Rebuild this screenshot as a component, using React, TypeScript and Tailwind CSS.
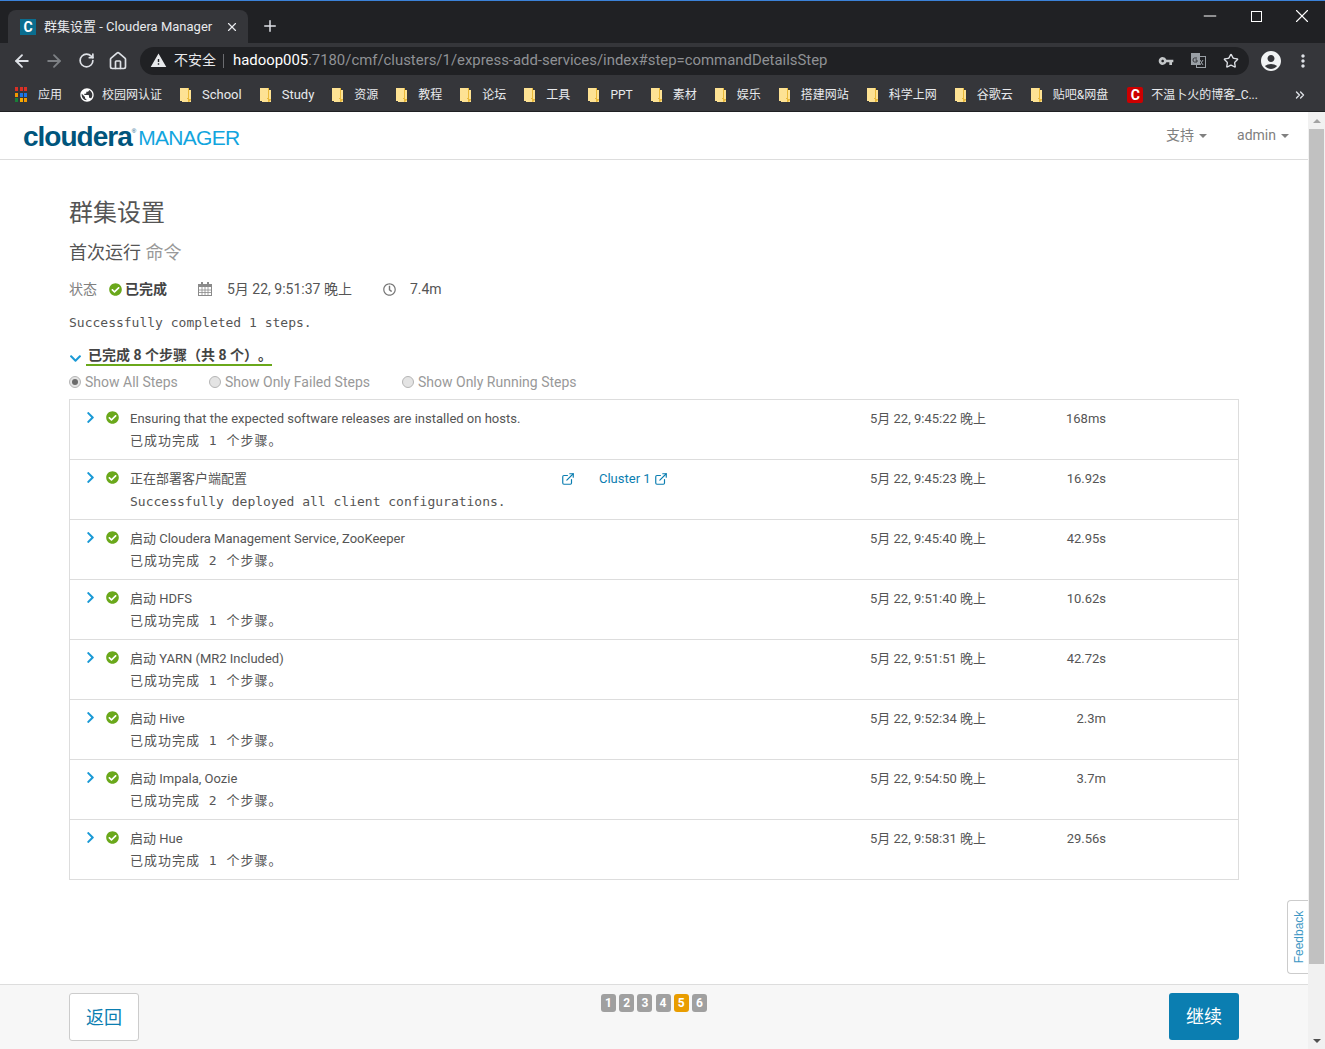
import { ArrowLeft, ArrowRight, RotateCw, Home, Plus, X, Minus, Star, ChevronsRight, ExternalLink } from 'lucide-react'
import { MdWarning, MdVpnKey, MdAccountCircle, MdMoreVert, MdPublic } from 'react-icons/md'
import { FaCheckCircle, FaChevronRight, FaChevronDown, FaRegClock } from 'react-icons/fa'

const cjk = "font-['Roboto','Noto_Sans_CJK_SC',sans-serif]"
const mono = "font-['DejaVu_Sans_Mono','Noto_Sans_CJK_SC',monospace]"

const bookmarks = [
  { label: 'School', latin: true },
  { label: 'Study', latin: true },
  { label: '资源' },
  { label: '教程' },
  { label: '论坛' },
  { label: '工具' },
  { label: 'PPT' },
  { label: '素材' },
  { label: '娱乐' },
  { label: '搭建网站' },
  { label: '科学上网' },
  { label: '谷歌云' },
  { label: '贴吧&网盘' },
]

const steps = [
  { title: 'Ensuring that the expected software releases are installed on hosts.', detail: '1', time: '5月 22, 9:45:22 晚上', dur: '168ms' },
  { title: '正在部署客户端配置', mono: 'Successfully deployed all client configurations.', link: true, time: '5月 22, 9:45:23 晚上', dur: '16.92s' },
  { title: '启动 Cloudera Management Service, ZooKeeper', detail: '2', time: '5月 22, 9:45:40 晚上', dur: '42.95s' },
  { title: '启动 HDFS', detail: '1', time: '5月 22, 9:51:40 晚上', dur: '10.62s' },
  { title: '启动 YARN (MR2 Included)', detail: '1', time: '5月 22, 9:51:51 晚上', dur: '42.72s' },
  { title: '启动 Hive', detail: '1', time: '5月 22, 9:52:34 晚上', dur: '2.3m' },
  { title: '启动 Impala, Oozie', detail: '2', time: '5月 22, 9:54:50 晚上', dur: '3.7m' },
  { title: '启动 Hue', detail: '1', time: '5月 22, 9:58:31 晚上', dur: '29.56s' },
]

function Folder() {
  return (
    <svg width="11" height="14" viewBox="0 0 11 14" className="shrink-0">
      <path d="M0 0h9v2h2v12H2v-1H0z" fill="#fde293" />
      <path d="M8 0h1v11h2v1l-2 2H8v-3H7v-1h1z" fill="#e9b93a" />
    </svg>
  )
}

function AppsGrid() {
  const colors = ['#d93025', '#d93025', '#d93025', '#f29900', '#1a73e8', '#1a73e8', '#188038', '#f9ab00', '#f29900']
  return (
    <div className="grid grid-cols-3 gap-[1.5px] w-[12px] shrink-0">
      {colors.map((c, i) => (
        <span key={i} className="w-[3px] h-[4px]" style={{ background: c }} />
      ))}
    </div>
  )
}

function TranslateIcon() {
  return (
    <svg width="15" height="15" viewBox="0 0 15 15">
      <rect x="5.5" y="3.5" width="9" height="11" fill="none" stroke="#9aa0a6" />
      <path d="M0 0h9v12H0z" fill="#9aa0a6" />
      <path d="M6 5H3.5a1.5 2 0 1 0 0 4H6V7H4.5" fill="none" stroke="#35363a" />
      <path d="M9 7l3 5M12 7l-3 5" stroke="#9aa0a6" />
    </svg>
  )
}

function CalendarIcon() {
  return (
    <svg width="14" height="14" viewBox="0 0 14 14" className="text-[#8a8a8a]">
      <rect x="0.5" y="2.5" width="13" height="11" fill="none" stroke="currentColor" />
      <path d="M0 2h14v3H0z" fill="currentColor" />
      <path d="M3 0h2v3H3zM9 0h2v3H9z" fill="currentColor" />
      <path d="M0.5 8h13M0.5 10.5h13M4 5v8M7 5v8M10 5v8" stroke="currentColor" strokeWidth="0.8" fill="none" />
    </svg>
  )
}

function Radio({ on, label, className }: { on?: boolean; label: string; className: string }) {
  return (
    <div className={`flex items-center gap-[4px] ${className}`}>
      <span className="w-3 h-3 rounded-full border border-[#b5b5b5] bg-[#e4e4e4] flex items-center justify-center">
        {on && <span className="w-[6px] h-[6px] rounded-full bg-[#6b6b6b]" />}
      </span>
      <span>{label}</span>
    </div>
  )
}

function BrowserChrome() {
  return (
    <div className={`bg-[#202124] text-white border-t border-t-[#3b82d9] ${cjk}`}>
      {/* tabs */}
      <div className="h-[42px] flex items-end pl-[8px] relative">
        <div className="w-[240px] h-[33px] bg-[#35363a] rounded-t-lg flex items-center pl-[12px] pr-[9px]">
          <span className="w-[16px] h-[16px] bg-[#0a6d8f] flex items-center justify-center text-[14px] font-bold leading-none">C</span>
          <span className="ml-[8px] text-[13px] text-[#e8eaed] flex-1 whitespace-nowrap">群集设置 - Cloudera Manager</span>
          <X size={14} strokeWidth={2} className="text-[#e8eaed]" />
        </div>
        <Plus size={18} strokeWidth={2} className="ml-[13px] mb-[8px] text-[#dee1e6]" />
        <div className="absolute right-0 top-0 h-[30px] flex items-center text-white">
          <div className="w-[46px] flex justify-center"><Minus size={20} strokeWidth={1.2} /></div>
          <div className="w-[46px] flex justify-center"><span className="w-[11px] h-[11px] border border-white" /></div>
          <div className="w-[46px] flex justify-center"><X size={22} strokeWidth={1.2} /></div>
        </div>
      </div>
      {/* address bar */}
      <div className="h-[35px] bg-[#35363a] flex items-center pl-[12px] pr-[10px]">
        <ArrowLeft size={20} strokeWidth={2.2} className="text-[#dee1e6]" />
        <ArrowRight size={20} strokeWidth={2.2} className="ml-[12px] text-[#7d8084]" />
        <RotateCw size={17} strokeWidth={2.4} className="ml-[14px] text-[#dee1e6]" />
        <Home size={20} strokeWidth={2} className="ml-[13px] text-[#dee1e6]" />
        <div className="ml-[12px] w-[1109px] h-[28px] rounded-full bg-[#202124] flex items-center pl-[10px] pr-[10px]">
          <MdWarning size={17} className="text-[#e8eaed]" />
          <span className="ml-[7px] text-[14px] text-[#e8eaed]">不安全</span>
          <span className="ml-[7px] w-px h-[14px] bg-[#6b6c70]" />
          <span className="ml-[9px] text-[14.9px] text-white whitespace-nowrap">hadoop005<span className="text-[#8f9195]">:7180/cmf/clusters/1/express-add-services/index#step=commandDetailsStep</span></span>
          <div className="ml-auto flex items-center gap-[17px] text-[#c4c7c9]">
            <MdVpnKey size={16} />
            <TranslateIcon />
            <Star size={16} strokeWidth={2} className="text-[#dee1e6]" />
          </div>
        </div>
        <MdAccountCircle size={24} className="ml-[10px] text-[#f1f3f4]" />
        <MdMoreVert size={20} className="ml-[10px] text-[#dee1e6]" />
      </div>
      {/* bookmarks */}
      <div className="h-[34px] bg-[#35363a] border-b border-b-[#1f2023] flex items-center pl-[15px] text-[12px] text-[#e8eaed] whitespace-nowrap">
        <div className="w-[64px] flex items-center gap-[11px] shrink-0"><AppsGrid /><span>应用</span></div>
        <div className="w-[101px] flex items-center gap-[7px] shrink-0"><MdPublic size={16} className="text-white" /><span>校园网认证</span></div>
        <div className="flex items-center gap-[18px]">
          {bookmarks.map((b) => (
            <div key={b.label} className={`flex items-center gap-[11px] shrink-0 ${b.latin ? 'text-[13px]' : ''}`}>
              <Folder />
              <span>{b.label}</span>
            </div>
          ))}
          <div className="ml-[1px] flex items-center gap-[8px]">
            <span className="w-[16px] h-[16px] bg-[#c00] rounded-[2px] flex items-center justify-center text-white text-[14px] font-bold leading-none">C</span>
            <span>不温卜火的博客_C...</span>
          </div>
        </div>
        <ChevronsRight size={14} strokeWidth={2.4} className="ml-auto mr-[18px] text-[#dee1e6]" />
      </div>
    </div>
  )
}

function StepRow({ s }: { s: (typeof steps)[number] }) {
  return (
    <div className="h-[60px] last:h-[59px] border-b border-[#dddddd] last:border-b-0 flex items-start">
      <FaChevronRight size={13} className="ml-[14px] mt-[11px] text-[#1b9ad6]" />
      <FaCheckCircle size={13} className="ml-[9px] mt-[11px] text-[#6aa81b]" />
      <div className="ml-[11px] w-[430px] pt-[10px]">
        <div className="text-[13px] leading-[18px] text-[#555] whitespace-nowrap">{s.title}</div>
        {s.mono ? (
          <div className={`${mono} text-[13px] leading-[18px] mt-[5px] text-[#555] whitespace-nowrap`}>{s.mono}</div>
        ) : (
          <div className={`${mono} text-[13px] tracking-[1px] leading-[18px] mt-[4px] text-[#555] whitespace-pre`}>已成功完成 {s.detail} 个步骤。</div>
        )}
      </div>
      <div className="w-[110px] pt-[10px] h-[28px] flex items-center text-[#0b7eb1] text-[13px] whitespace-nowrap">
        {s.link && (
          <>
            <ExternalLink size={14} strokeWidth={2} className="ml-[1px]" />
            <span className="ml-[24px]">Cluster 1</span>
            <ExternalLink size={14} strokeWidth={2} className="ml-[3px]" />
          </>
        )}
      </div>
      <div className="ml-[200px] w-[130px] pt-[10px] text-[13px] leading-[18px] text-[#555] whitespace-nowrap">{s.time}</div>
      <div className="w-[106px] pt-[10px] text-[13px] leading-[18px] text-[#555] text-right">{s.dur}</div>
    </div>
  )
}

export default function App() {
  return (
    <div className={`w-[1325px] h-[1049px] flex flex-col overflow-hidden bg-white ${cjk}`}>
      <BrowserChrome />
      <div className="flex-1 flex min-h-0">
        <div className="flex-1 flex flex-col relative min-w-0">
          {/* nav */}
          <div className="h-[48px] shrink-0 border-b border-[#dddddd] flex items-center pl-[23px] pr-[19px]">
            <div className="flex items-baseline mt-[3px] font-['Liberation_Sans',sans-serif]">
              <span className="text-[28px] leading-none font-bold tracking-[-1px] text-[#00557c]">cloudera</span>
              <span className="text-[6px] leading-none text-[#00557c] -translate-y-[13px]">®</span>
              <span className="ml-[2px] text-[21px] leading-none tracking-[-0.7px] text-[#12a5de] -translate-y-px">MANAGER</span>
            </div>
            <div className="ml-auto flex items-center text-[#808080]">
              <span className="text-[14px]">支持</span>
              <span className="ml-[5px] border-x-4 border-x-transparent border-t-4 border-t-[#808080]" />
              <span className="ml-[30px] text-[14px]">admin</span>
              <span className="ml-[5px] border-x-4 border-x-transparent border-t-4 border-t-[#808080]" />
            </div>
          </div>

          {/* content */}
          <div className="flex-1 min-h-0 px-[69px] pt-[36px]">
            <h1 className="text-[24px] leading-[34px] text-[#555]">群集设置</h1>
            <h2 className="mt-[10px] text-[18px] leading-[26px] text-[#555]">首次运行 <span className="text-[#999]">命令</span></h2>
            <div className="mt-[13px] h-[20px] flex items-center text-[14px] text-[#555] whitespace-nowrap">
              <span className="text-[#808080]">状态</span>
              <FaCheckCircle size={13} className="ml-[12px] text-[#6aa81b]" />
              <span className="ml-[3px] font-bold text-[#444]">已完成</span>
              <span className="ml-[31px]"><CalendarIcon /></span>
              <span className="ml-[15px]">5月 22, 9:51:37 晚上</span>
              <FaRegClock size={13} className="ml-[31px] text-[#777]" />
              <span className="ml-[14px]">7.4m</span>
            </div>
            <div className={`${mono} mt-[15px] text-[13px] leading-[18px] text-[#555] whitespace-nowrap`}>Successfully completed 1 steps.</div>
            <div className="mt-[14px] flex items-start">
              <FaChevronDown size={13} className="mt-[6px] text-[#1b9ad6]" />
              <div className="ml-[4px] w-[186px] border-b-2 border-[#6aa81b] text-[14px] leading-[19px] pl-[2px] h-[20px] font-bold text-[#444] whitespace-nowrap">已完成 8 个步骤（共 8 个）<span className="ml-[7px]">。</span></div>
            </div>
            <div className="mt-[6px] h-[20px] flex items-center text-[14px] text-[#999] whitespace-nowrap">
              <Radio on label="Show All Steps" className="w-[140px]" />
              <Radio label="Show Only Failed Steps" className="w-[193px]" />
              <Radio label="Show Only Running Steps" className="" />
            </div>
            <div className="mt-[7px] w-[1170px] border border-[#dddddd]">
              {steps.map((s) => (
                <StepRow key={s.time} s={s} />
              ))}
            </div>
          </div>

          {/* footer */}
          <div className="h-[65px] shrink-0 border-t border-[#dddddd] bg-[#f7f7f7] flex items-start justify-between px-[69px] pt-[8px] relative">
            <button className="w-[70px] h-[48px] bg-white border border-[#cccccc] rounded-[3px] text-[18px] text-[#0b7eb1]">返回</button>
            <div className="absolute left-[601px] top-[9px] flex gap-[3.2px]">
              {['1', '2', '3', '4', '5', '6'].map((n) => (
                <span key={n} className={`w-[15px] h-[18px] rounded-[3px] text-white text-[12px] font-bold flex items-center justify-center ${n === '5' ? 'bg-[#e99d00]' : 'bg-[#a0a0a0]'}`}>{n}</span>
              ))}
            </div>
            <button className="w-[70px] h-[47px] bg-[#0b7eb1] rounded-[3px] text-[18px] text-white">继续</button>
          </div>

          {/* feedback tab */}
          <div className="absolute right-0 top-[788px] w-[21px] h-[74px] bg-white border border-r-0 border-[#cccccc] rounded-l-[4px] flex items-center justify-center pl-[3px]">
            <span className="-rotate-90 text-[12px] text-[#3d97c4] font-['Liberation_Sans',sans-serif]">Feedback</span>
          </div>
        </div>

        {/* scrollbar */}
        <div className="w-[17px] shrink-0 bg-[#f1f1f1] flex flex-col">
          <div className="h-[17px] flex items-center justify-center"><span className="border-x-4 border-x-transparent border-b-4 border-b-[#a3a3a3]" /></div>
          <div className="h-[835px] mx-[1px] bg-[#c1c1c1]" />
          <div className="mt-auto h-[17px] flex items-center justify-center"><span className="border-x-4 border-x-transparent border-t-4 border-t-[#505050]" /></div>
        </div>
      </div>
    </div>
  )
}
